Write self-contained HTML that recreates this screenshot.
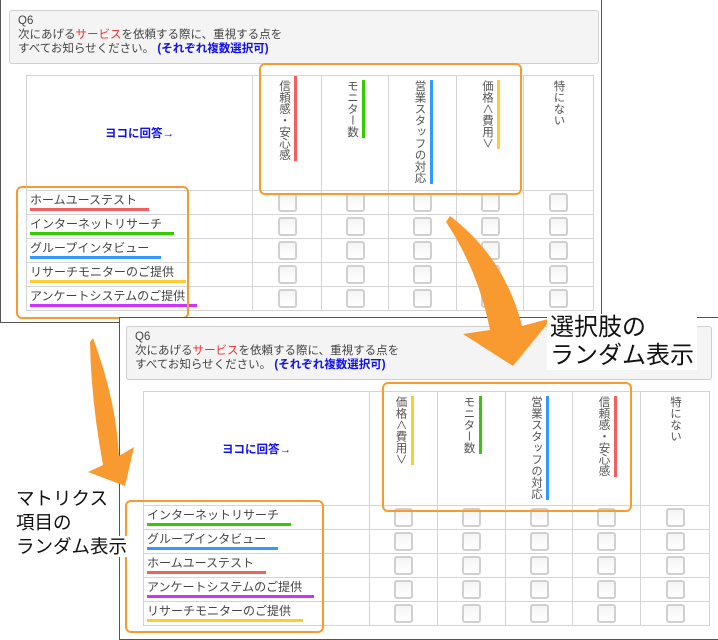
<!DOCTYPE html>
<html><head><meta charset="utf-8">
<style>
*{margin:0;padding:0;box-sizing:border-box}
body{width:718px;height:640px;background:#fff;position:relative;overflow:hidden;font-family:"Liberation Sans","Noto Sans CJK JP",sans-serif;color:#444}
.panel{position:absolute;background:#fff;border:1px solid #555}
.q{position:absolute;background:#f4f4f4;border:1px solid #cfcfcf;border-radius:3px;font-size:11.5px;line-height:14px;padding:3px 8px;color:#444}
.q .r{color:#f03030}.q .b{color:#1010ee;font-weight:bold}
table{position:absolute;border-collapse:collapse;table-layout:fixed}
td{border:1px solid #d4d4d4;padding:0;height:24px;text-align:center;vertical-align:middle}
tr.h td{vertical-align:top;overflow:hidden}
td.lab{text-align:left;padding-left:3px;font-size:12px;color:#444;vertical-align:top;padding-top:2px}
.lab span{display:inline-block;border-bottom:3px solid;padding:0 12px 0 0;line-height:15px}
.cb{display:inline-block;width:19px;height:19px;border:2px solid #d0d0d0;border-radius:3px;background:linear-gradient(#f4f4f4,#fff);vertical-align:middle}
.vh{display:inline-flex;margin-top:4px;white-space:nowrap}
.vh i{font-style:normal;writing-mode:vertical-rl;font-size:11.5px;line-height:14px;color:#555;white-space:nowrap;flex:none}
.vh b{display:block;width:3px;margin-left:3px;flex:none}
.yoko{color:#1010ee;font-weight:bold;font-size:11.5px;vertical-align:middle!important}
.ob{position:absolute;border:2px solid #f99a30;border-radius:6px}
.big{position:absolute;color:#111;background:#fff}
</style></head><body>

<div class="panel" style="left:0;top:0;width:602px;height:323px;border-top:none"></div>
<div class="q" style="left:9px;top:10px;width:590px;height:54px">Q6<br>次にあげる<span class="r">サービス</span>を依頼する際に、重視する点を<br>すべてお知らせください。 <span class="b">(それぞれ複数選択可)</span></div>
<table style="left:26px;top:75px;width:567px">
<colgroup><col style="width:226px"><col style="width:69px"><col style="width:67px"><col style="width:68px"><col style="width:67px"><col style="width:70px"></colgroup>
<tr class="h"><td class="yoko" style="height:115px">ヨコに回答→</td>
<td><span class="vh"><i>信頼感・安心感</i><b style="background:#f06060;margin-top:-4px"></b></span></td>
<td><span class="vh"><i>モニター数</i><b style="background:#33cc00"></b></span></td>
<td><span class="vh"><i>営業スタッフの対応</i><b style="background:#3399ff"></b></span></td>
<td><span class="vh"><i>価格＜費用＞</i><b style="background:#ffcc33"></b></span></td>
<td><span class="vh"><i>特にない</i></span></td></tr>
<tr><td class="lab"><span style="border-color:#f06060">ホームユーステスト</span></td><td><i class="cb"></i></td><td><i class="cb"></i></td><td><i class="cb"></i></td><td><i class="cb"></i></td><td><i class="cb"></i></td></tr>
<tr><td class="lab"><span style="border-color:#33cc00">インターネットリサーチ</span></td><td><i class="cb"></i></td><td><i class="cb"></i></td><td><i class="cb"></i></td><td><i class="cb"></i></td><td><i class="cb"></i></td></tr>
<tr><td class="lab"><span style="border-color:#3399ff">グループインタビュー</span></td><td><i class="cb"></i></td><td><i class="cb"></i></td><td><i class="cb"></i></td><td><i class="cb"></i></td><td><i class="cb"></i></td></tr>
<tr><td class="lab"><span style="border-color:#ffcc33">リサーチモニターのご提供</span></td><td><i class="cb"></i></td><td><i class="cb"></i></td><td><i class="cb"></i></td><td><i class="cb"></i></td><td><i class="cb"></i></td></tr>
<tr><td class="lab"><span style="border-color:#cc33ff">アンケートシステムのご提供</span></td><td><i class="cb"></i></td><td><i class="cb"></i></td><td><i class="cb"></i></td><td><i class="cb"></i></td><td><i class="cb"></i></td></tr>
</table>
<div class="ob" style="left:259px;top:63px;width:263px;height:132px"></div>
<div class="ob" style="left:16px;top:186px;width:173px;height:133px"></div>

<div class="panel" style="left:119px;top:317px;width:600px;height:323px"></div>
<div class="q" style="left:126px;top:326px;width:586px;height:54px">Q6<br>次にあげる<span class="r">サービス</span>を依頼する際に、重視する点を<br>すべてお知らせください。 <span class="b">(それぞれ複数選択可)</span></div>
<table style="left:143px;top:391px;width:566px">
<colgroup><col style="width:226px"><col style="width:68px"><col style="width:68px"><col style="width:67px"><col style="width:68px"><col style="width:69px"></colgroup>
<tr class="h"><td class="yoko" style="height:114px">ヨコに回答→</td>
<td><span class="vh"><i>価格＜費用＞</i><b style="background:#ffcc33"></b></span></td>
<td><span class="vh"><i>モニター数</i><b style="background:#33cc00"></b></span></td>
<td><span class="vh"><i>営業スタッフの対応</i><b style="background:#3399ff"></b></span></td>
<td><span class="vh"><i>信頼感・安心感</i><b style="background:#f06060"></b></span></td>
<td><span class="vh"><i>特にない</i></span></td></tr>
<tr><td class="lab"><span style="border-color:#33cc00">インターネットリサーチ</span></td><td><i class="cb"></i></td><td><i class="cb"></i></td><td><i class="cb"></i></td><td><i class="cb"></i></td><td><i class="cb"></i></td></tr>
<tr><td class="lab"><span style="border-color:#3399ff">グループインタビュー</span></td><td><i class="cb"></i></td><td><i class="cb"></i></td><td><i class="cb"></i></td><td><i class="cb"></i></td><td><i class="cb"></i></td></tr>
<tr><td class="lab"><span style="border-color:#f06060">ホームユーステスト</span></td><td><i class="cb"></i></td><td><i class="cb"></i></td><td><i class="cb"></i></td><td><i class="cb"></i></td><td><i class="cb"></i></td></tr>
<tr><td class="lab"><span style="border-color:#cc33ff">アンケートシステムのご提供</span></td><td><i class="cb"></i></td><td><i class="cb"></i></td><td><i class="cb"></i></td><td><i class="cb"></i></td><td><i class="cb"></i></td></tr>
<tr><td class="lab"><span style="border-color:#ffcc33">リサーチモニターのご提供</span></td><td><i class="cb"></i></td><td><i class="cb"></i></td><td><i class="cb"></i></td><td><i class="cb"></i></td><td><i class="cb"></i></td></tr>
</table>
<div class="ob" style="left:382px;top:382px;width:250px;height:130px"></div>
<div class="ob" style="left:125px;top:500px;width:199px;height:133px"></div>

<svg width="718" height="640" style="position:absolute;left:0;top:0">
<path d="M450,216 Q505,258 522,326 L552,318 L513,366 L463,334 L490,330 Q478,270 446,222 Z" fill="#f99a30"/>
<path d="M93,338 Q116,400 119,456 L134,447 L125,486 L88,472 L103,465 Q91,400 90,342 Z" fill="#f99a30"/>
</svg>

<div class="big" style="left:547px;top:314px;font-size:24px;line-height:28px;padding:0 3px">選択肢の<br>ランダム表示</div>
<div class="big" style="left:16px;top:487px;font-size:18.5px;line-height:24px;background:transparent">マトリクス<br>項目の<br><span style="background:#fff">ランダム表示</span></div>
</body></html>
